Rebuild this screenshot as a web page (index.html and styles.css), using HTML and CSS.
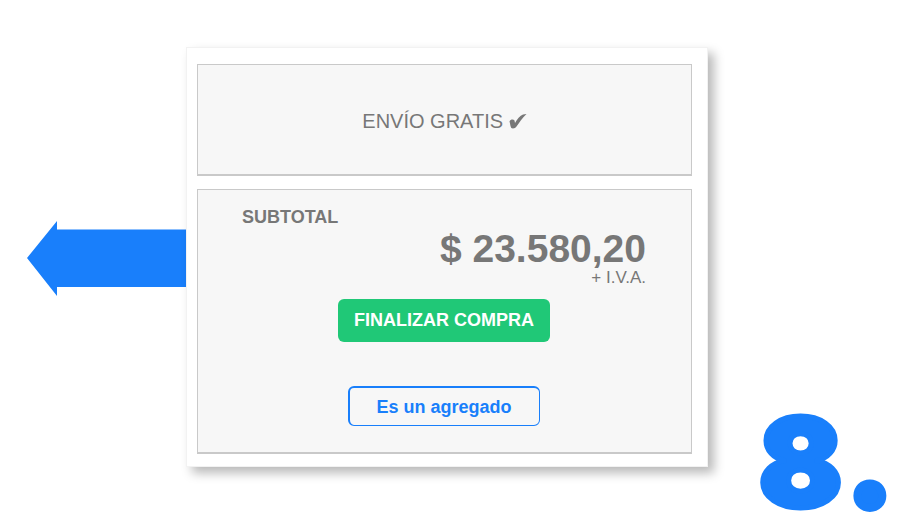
FILE: index.html
```html
<!DOCTYPE html>
<html lang="es">
<head>
<meta charset="utf-8">
<meta name="viewport" content="width=device-width, initial-scale=1">
<title>Finalizar compra</title>
<link rel="stylesheet" href="styles.css">
</head>
<body>
<main class="page">
  <svg class="arrow" viewBox="0 0 159 76" aria-hidden="true"><path d="M0 37 30 0V8.500H159V66H30V75Z" fill="#197ffb"/></svg>
  <section class="card">
    <p class="panel shipping">ENVÍO GRATIS <svg class="check" viewBox="0 0 18 16" aria-hidden="true"><path d="M0.500 8.500C1.500 6 4.500 6 5.500 7.500L6 10C8 6 11 2.500 14 1.500L17.500 1C13 5 10 10 7.500 13.500C6.500 15.500 3.500 16 2.300 15C1.200 13 1.300 11 0.500 8.500Z" fill="#777"/></svg></p>
    <div class="panel summary">
      <h1 class="label">SUBTOTAL</h1>
      <p class="price">$ 23.580,20</p>
      <p class="tax">+ I.V.A.</p>
      <button class="button buy" type="button">FINALIZAR COMPRA</button>
      <button class="button extra" type="button">Es un agregado</button>
    </div>
  </section>
  <p class="step">8<span class="dot">.</span></p>
</main>
</body>
</html>
```

FILE: styles.css
```css
* {
  box-sizing: border-box;
}

body {
  margin: 0;
  background: #fff;
  color: #777;
  font-family: "Liberation Sans", Arial, sans-serif;
}

.page {
  display: grid;
  grid-template-columns: 159px minmax(0, 1fr) 192px;
  align-items: start;
  min-height: 100vh;
  padding: 47px 0 0 27px;
  overflow: hidden;
}

.arrow {
  display: block;
  width: 100%;
  margin-top: 174px;
}

.card {
  display: grid;
  gap: 13px;
  padding: 16px 15px 12px 10px;
  border: 1px solid #f2f2f2;
  background: #fff;
  box-shadow: 6px 6px 10px rgba(0, 0, 0, 0.28);
}

.panel {
  margin: 0;
  border: 1px solid #c9c9c9;
  border-bottom-width: 2px;
  background: #f7f7f7;
}

.shipping {
  padding: 44px 16px 41px;
  font-size: 20px;
  line-height: 24px;
  text-align: center;
}

.check {
  width: 18px;
  height: 16px;
  vertical-align: -1px;
}

.summary {
  display: flex;
  flex-direction: column;
  align-items: center;
  padding: 17px 45px 26px 44px;
}

.label,
.price,
.tax {
  margin: 0;
}

.label {
  align-self: flex-start;
  font-size: 18px;
  line-height: 20px;
}

.price {
  align-self: flex-end;
  font-size: 39px;
  font-weight: bold;
  line-height: 44px;
}

.tax {
  align-self: flex-end;
  font-size: 17px;
  line-height: 14px;
}

.button {
  border-radius: 6px;
  font-family: inherit;
  font-size: 18px;
  font-weight: bold;
  line-height: 20px;
}

.buy {
  margin-top: 14px;
  padding: 11px 16px 12px;
  border: 0;
  background: #20c877;
  color: #fff;
}

.extra {
  margin-top: 44px;
  padding: 9px 27px 8px 26px;
  border: 1px solid #197ffb;
  border-width: 2px 1px 1px 2px;
  background: transparent;
  color: #197ffb;
}

.step {
  align-self: end;
  justify-self: end;
  margin: 0;
  padding: 0 7px 3px 0;
  color: #197ffb;
  font-family: Inter, sans-serif;
  font-size: 124px;
  font-weight: 900;
  line-height: 100px;
  -webkit-text-stroke: 5px #197ffb;
}

.dot {
  margin-left: 4px;
  -webkit-text-stroke-width: 8px;
}
```
